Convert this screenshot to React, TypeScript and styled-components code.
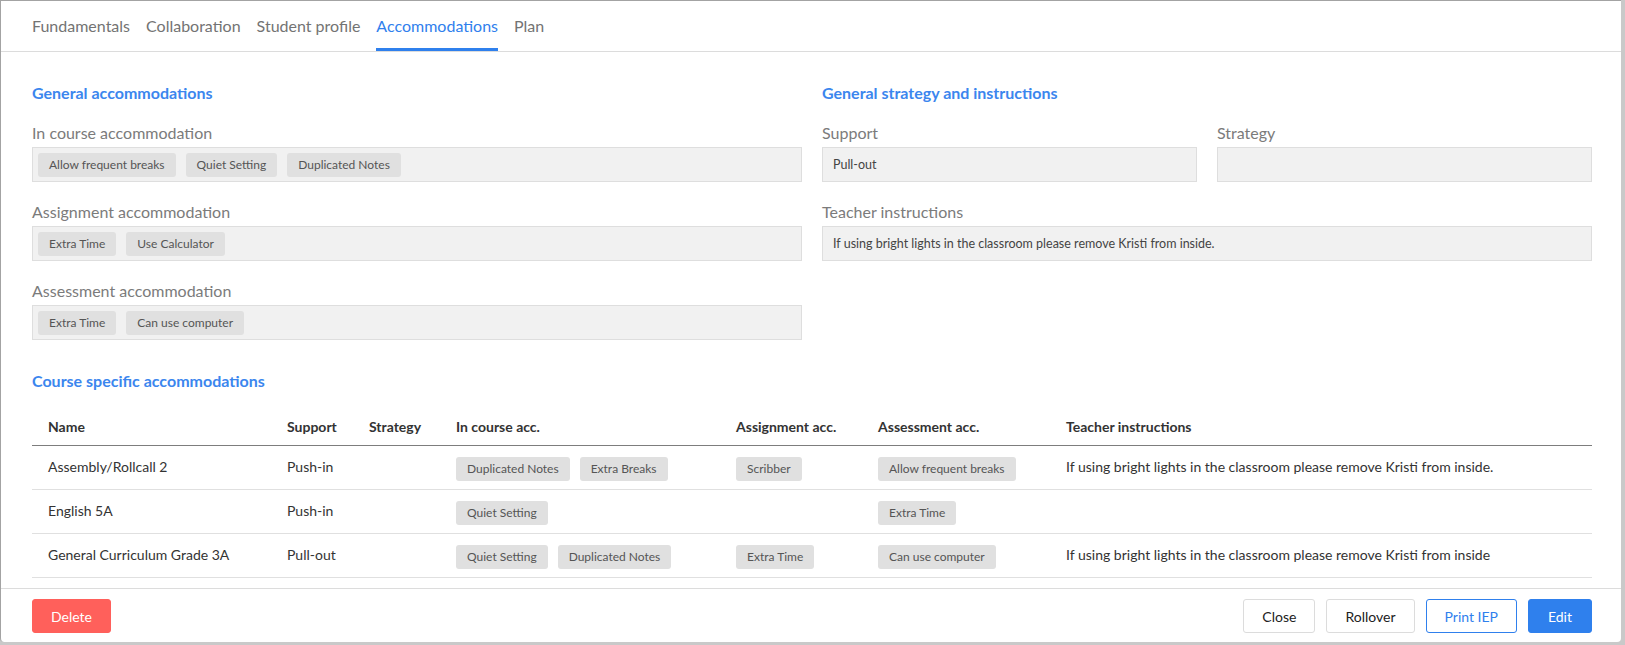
import React from "react";
import styled, { createGlobalStyle } from "styled-components";

const GlobalStyle = createGlobalStyle`
  html, body { margin: 0; padding: 0; background: #fff; }
  body { font-family: Lato, "Open Sans", sans-serif; -webkit-font-smoothing: antialiased; }
  * { box-sizing: border-box; }
`;

const BLUE = "#2f80ed";

const Page = styled.div`
  width: 1625px;
  height: 645px;
  background: #c9c9c9;
  padding: 0 4px 3px 0;
`;

const Modal = styled.div`
  height: 642px;
  background: #fff;
  border-top: 1px solid #a3a3a3;
  border-left: 1px solid #a3a3a3;
  border-radius: 0 0 4px 4px;
  display: flex;
  flex-direction: column;
  overflow: hidden;
`;

const TabBar = styled.div`
  display: flex;
  gap: 16px;
  padding: 0 29px 0 31px;
  height: 51px;
  border-bottom: 1px solid #dcdcdc;
`;

const Tab = styled.div<{ $active?: boolean }>`
  font-size: 16px;
  line-height: 20px;
  color: ${(p) => (p.$active ? BLUE : "#737373")};
  padding-top: 15px;
  border-bottom: 3px solid ${(p) => (p.$active ? BLUE : "transparent")};
`;

const Content = styled.div`
  flex: 1;
  padding: 31px 29px 10px 31px;
  border-bottom: 1px solid #dcdcdc;
`;

const Columns = styled.div`
  display: grid;
  grid-template-columns: 1fr 1fr;
  column-gap: 20px;
`;

const Column = styled.div`
  display: flex;
  flex-direction: column;
  gap: 20px;
`;

const Heading = styled.div`
  font-size: 16px;
  font-weight: 700;
  line-height: 20px;
  color: #3b86ee;
`;

const Field = styled.div`
  display: flex;
  flex-direction: column;
  gap: 4px;
`;

const FieldRow = styled.div`
  display: grid;
  grid-template-columns: 1fr 1fr;
  column-gap: 20px;
`;

const Label = styled.div`
  font-size: 16px;
  line-height: 20px;
  color: #7b7b7b;
`;

const Box = styled.div`
  display: flex;
  align-items: center;
  gap: 10px;
  min-height: 35px;
  padding: 4px 5px;
  background: #f1f1f1;
  border: 1px solid #dedede;
`;

const BoxText = styled.div`
  font-size: 12.5px;
  color: #444;
  padding-left: 5px;
`;

const Chip = styled.span`
  display: inline-flex;
  align-items: center;
  height: 24px;
  padding: 0 11px;
  background: #e0e0e0;
  border-radius: 3px;
  font-size: 12px;
  color: #555;
  white-space: nowrap;
`;

const CourseHeading = styled(Heading)`
  margin-top: 31px;
`;

const Table = styled.div`
  margin-top: 16px;
`;

const TRow = styled.div<{ $head?: boolean }>`
  display: grid;
  grid-template-columns: 239px 82px 87px 280px 142px 188px 1fr;
  border-bottom: 1px solid ${(p) => (p.$head ? "#7d7d7d" : "#e0e0e0")};
`;

const HeadCell = styled.div`
  padding: 10px 16px 8px;
  font-size: 14px;
  font-weight: 700;
  line-height: 20px;
  color: #333;
  white-space: nowrap;
`;

const Cell = styled.div`
  display: flex;
  gap: 10px;
  padding: 10px 16px 9px;
  font-size: 14px;
  line-height: 22px;
  color: #333;
  white-space: nowrap;
  align-items: flex-start;
`;

const ChipCell = styled(Cell)`
  padding-top: 11px;
  padding-bottom: 8px;
`;

const Footer = styled.div`
  display: flex;
  align-items: center;
  padding: 10px 29px 9px 31px;
  gap: 11px;
`;

const Spacer = styled.div`
  flex: 1;
`;

const Button = styled.button<{ $variant?: "danger" | "default" | "outline" | "primary" }>`
  height: 34px;
  min-width: 64px;
  padding: 0 18px;
  font-family: Lato, "Open Sans", sans-serif;
  font-size: 14px;
  border-radius: 3px;
  cursor: pointer;
  border: 1px solid
    ${(p) =>
      p.$variant === "danger"
        ? "#ff605b"
        : p.$variant === "primary"
        ? BLUE
        : p.$variant === "outline"
        ? BLUE
        : "#dcdcdc"};
  background: ${(p) =>
    p.$variant === "danger" ? "#ff605b" : p.$variant === "primary" ? BLUE : "#fff"};
  color: ${(p) =>
    p.$variant === "danger" || p.$variant === "primary"
      ? "#fff"
      : p.$variant === "outline"
      ? BLUE
      : "#222"};
`;

const tabs = ["Fundamentals", "Collaboration", "Student profile", "Accommodations", "Plan"];

const rows = [
  {
    name: "Assembly/Rollcall 2",
    support: "Push-in",
    inCourse: ["Duplicated Notes", "Extra Breaks"],
    assignment: ["Scribber"],
    assessment: ["Allow frequent breaks"],
    teacher: "If using bright lights in the classroom please remove Kristi from inside.",
  },
  {
    name: "English 5A",
    support: "Push-in",
    inCourse: ["Quiet Setting"],
    assignment: [],
    assessment: ["Extra Time"],
    teacher: "",
  },
  {
    name: "General Curriculum Grade 3A",
    support: "Pull-out",
    inCourse: ["Quiet Setting", "Duplicated Notes"],
    assignment: ["Extra Time"],
    assessment: ["Can use computer"],
    teacher: "If using bright lights in the classroom please remove Kristi from inside",
  },
];

const Chips = ({ items }: { items: string[] }) => (
  <>
    {items.map((c) => (
      <Chip key={c}>{c}</Chip>
    ))}
  </>
);

export default function App() {
  return (
    <>
      <GlobalStyle />
      <Page>
        <Modal>
          <TabBar>
            {tabs.map((t) => (
              <Tab key={t} $active={t === "Accommodations"}>
                {t}
              </Tab>
            ))}
          </TabBar>
          <Content>
            <Columns>
              <Column>
                <Heading>General accommodations</Heading>
                <Field>
                  <Label>In course accommodation</Label>
                  <Box>
                    <Chips items={["Allow frequent breaks", "Quiet Setting", "Duplicated Notes"]} />
                  </Box>
                </Field>
                <Field>
                  <Label>Assignment accommodation</Label>
                  <Box>
                    <Chips items={["Extra Time", "Use Calculator"]} />
                  </Box>
                </Field>
                <Field>
                  <Label>Assessment accommodation</Label>
                  <Box>
                    <Chips items={["Extra Time", "Can use computer"]} />
                  </Box>
                </Field>
              </Column>
              <Column>
                <Heading>General strategy and instructions</Heading>
                <FieldRow>
                  <Field>
                    <Label>Support</Label>
                    <Box>
                      <BoxText>Pull-out</BoxText>
                    </Box>
                  </Field>
                  <Field>
                    <Label>Strategy</Label>
                    <Box />
                  </Field>
                </FieldRow>
                <Field>
                  <Label>Teacher instructions</Label>
                  <Box>
                    <BoxText>If using bright lights in the classroom please remove Kristi from inside.</BoxText>
                  </Box>
                </Field>
              </Column>
            </Columns>
            <CourseHeading>Course specific accommodations</CourseHeading>
            <Table>
              <TRow $head>
                <HeadCell>Name</HeadCell>
                <HeadCell>Support</HeadCell>
                <HeadCell>Strategy</HeadCell>
                <HeadCell>In course acc.</HeadCell>
                <HeadCell>Assignment acc.</HeadCell>
                <HeadCell>Assessment acc.</HeadCell>
                <HeadCell>Teacher instructions</HeadCell>
              </TRow>
              {rows.map((r) => (
                <TRow key={r.name}>
                  <Cell>{r.name}</Cell>
                  <Cell>{r.support}</Cell>
                  <Cell />
                  <ChipCell>
                    <Chips items={r.inCourse} />
                  </ChipCell>
                  <ChipCell>
                    <Chips items={r.assignment} />
                  </ChipCell>
                  <ChipCell>
                    <Chips items={r.assessment} />
                  </ChipCell>
                  <Cell>{r.teacher}</Cell>
                </TRow>
              ))}
            </Table>
          </Content>
          <Footer>
            <Button $variant="danger">Delete</Button>
            <Spacer />
            <Button>Close</Button>
            <Button>Rollover</Button>
            <Button $variant="outline">Print IEP</Button>
            <Button $variant="primary">Edit</Button>
          </Footer>
        </Modal>
      </Page>
    </>
  );
}
